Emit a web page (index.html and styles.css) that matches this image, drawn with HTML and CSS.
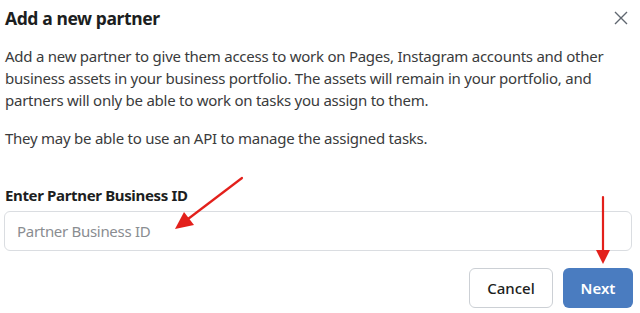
FILE: index.html
```html
<!DOCTYPE html>
<html lang="en">
<head>
<meta charset="UTF-8" />
<meta name="viewport" content="width=device-width, initial-scale=1" />
<title>Add a new partner</title>
<link rel="stylesheet" href="styles.css">
</head>
<body>

<div class="dialog">
  <div class="header">
    <h2 class="title">Add a new partner</h2>
    <button class="close" title="Close">
      <svg width="14" height="14" viewBox="0 0 14 14">
        <path d="M1 1 L13 13 M13 1 L1 13" stroke="#606770" stroke-width="1.4" fill="none" />
      </svg>
    </button>
  </div>

  <div class="content">
    <p>Add a new partner to give them access to work on Pages, Instagram accounts and other business assets in your business portfolio. The assets will remain in your portfolio, and partners will only be able to work on tasks you assign to them.</p>
    <p>They may be able to use an API to manage the assigned tasks.</p>

    <label class="label" for="partner-id">Enter Partner Business ID</label>
    <input class="field" id="partner-id" type="text" placeholder="Partner Business ID" />
  </div>

  <div class="footer">
    <button class="btn btn-cancel">Cancel</button>
    <button class="btn btn-next">Next</button>
  </div>

  <!-- annotation arrows -->
  <svg class="arrows" width="640" height="313" viewBox="0 0 640 313">
    <line x1="242" y1="178" x2="188" y2="219" stroke="#e3201b" stroke-width="2.2" stroke-linecap="round" />
    <polygon points="175,229 184,212 194,225" fill="#e3201b" />
    <line x1="603" y1="197" x2="603" y2="252" stroke="#e3201b" stroke-width="2.2" stroke-linecap="round" />
    <polygon points="603,264 596,250 610,250" fill="#e3201b" />
  </svg>
</div>

</body>
</html>
```

FILE: styles.css
```css
body {
  margin: 0;
  background: #fff;
  font-family: 'Noto Sans', 'Open Sans', Arial, sans-serif;
  color: #1c1e21;
}

.dialog {
  position: relative;
  width: 640px;
  height: 313px;
  padding: 0 7px 0 4px;
  box-sizing: border-box;
  overflow: hidden;
}

.header {
  display: flex;
  justify-content: space-between;
  align-items: center;
  height: 36px;
  padding-left: 1px;
}
.title {
  margin: 0;
  font-size: 17.5px;
  font-weight: 700;
  letter-spacing: -0.4px;
  color: #1c1e21;
}
.close {
  background: none;
  border: none;
  padding: 0;
  width: 14px;
  height: 14px;
  margin-right: 5px;
  cursor: pointer;
}

.content {
  padding-left: 1px;
}
.content p {
  margin: 16px 0 0;
  font-size: 15px;
  line-height: 22px;
  letter-spacing: -0.25px;
  color: #3a3b3c;
}
.content p:first-child {
  margin-top: 9px;
}

.label {
  display: block;
  margin-top: 36px;
  font-size: 15px;
  font-weight: 700;
  line-height: 20px;
  letter-spacing: -0.35px;
  color: #1c1e21;
}

.field {
  display: block;
  width: 100%;
  height: 40px;
  margin: 6px 0 0 -1px;
  box-sizing: border-box;
  padding: 0 12px;
  border: 1px solid #dadde1;
  border-radius: 6px;
  font-family: inherit;
  font-size: 15px;
  letter-spacing: -0.3px;
  color: #1c1e21;
}
.field::placeholder {
  color: #8a8d91;
}

.footer {
  display: flex;
  justify-content: flex-end;
  gap: 10px;
  margin-top: 17px;
}

.btn {
  height: 40px;
  border-radius: 6px;
  font-family: inherit;
  font-size: 15px;
  cursor: pointer;
}
.btn-cancel {
  width: 84px;
  background: #fff;
  border: 1px solid #ccd0d5;
  color: #1c1e21;
  font-weight: 500;
}
.btn-next {
  width: 70px;
  background: #4a7cc0;
  border: none;
  color: #fff;
  font-weight: 600;
}

.arrows {
  position: absolute;
  left: 0;
  top: 0;
  pointer-events: none;
}
```
